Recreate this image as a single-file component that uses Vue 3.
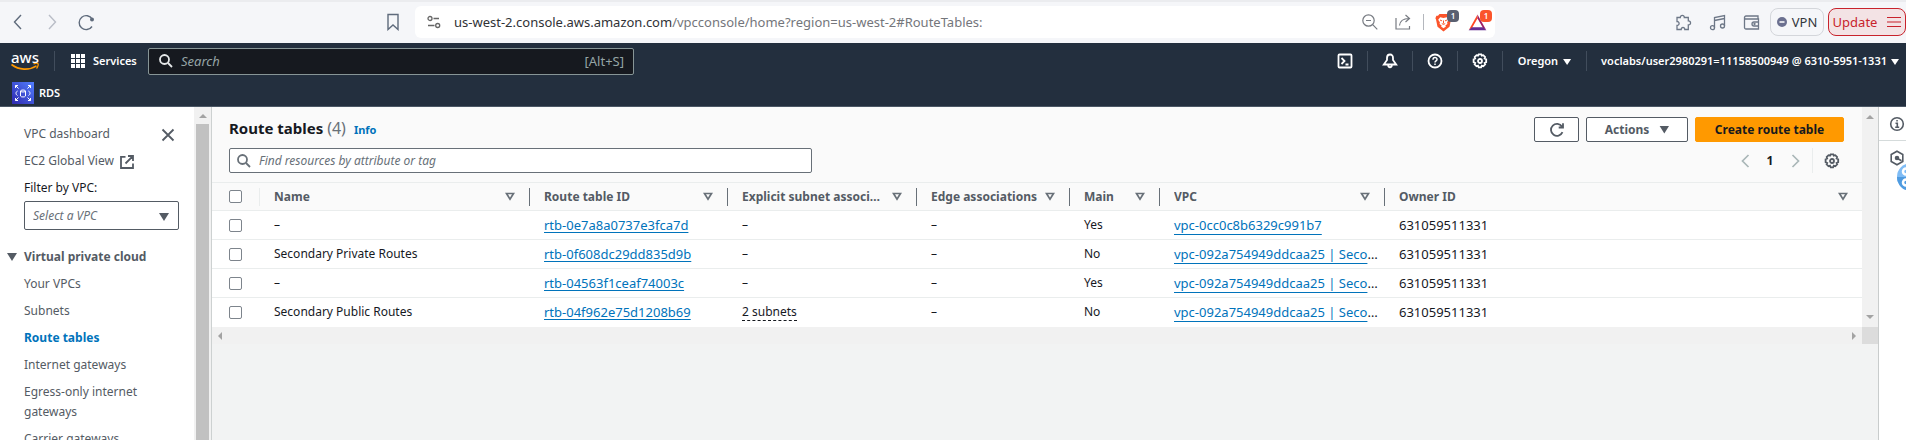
<script setup>
const columns = [
  { key: 'name', label: 'Name' },
  { key: 'id', label: 'Route table ID' },
  { key: 'subnets', label: 'Explicit subnet associations' },
  { key: 'edge', label: 'Edge associations' },
  { key: 'main', label: 'Main' },
  { key: 'vpc', label: 'VPC' },
  { key: 'owner', label: 'Owner ID' },
]

const rows = [
  { name: '–', id: 'rtb-0e7a8a0737e3fca7d', subnets: '', main: 'Yes', vpc: 'vpc-0cc0c8b6329c991b7' },
  { name: 'Secondary Private Routes', id: 'rtb-0f608dc29dd835d9b', subnets: '', main: 'No', vpc: 'vpc-092a754949ddcaa25 | Secondary' },
  { name: '–', id: 'rtb-04563f1ceaf74003c', subnets: '', main: 'Yes', vpc: 'vpc-092a754949ddcaa25 | Secondary' },
  { name: 'Secondary Public Routes', id: 'rtb-04f962e75d1208b69', subnets: '2 subnets', main: 'No', vpc: 'vpc-092a754949ddcaa25 | Secondary' },
]

const links = ['Your VPCs', 'Subnets', 'Route tables', 'Internet gateways', 'Egress-only internet gateways', 'Carrier gateways']
</script>

<template>
  <div class="app">
    <header class="browser">
      <div class="browser-left">
        <button class="nav-btn" aria-label="Back"><svg width="16" height="16" viewBox="0 0 16 16"><path d="M11 1 4.500 8 11 15" /></svg></button>
        <button class="nav-btn faded" aria-label="Forward"><svg width="16" height="16" viewBox="0 0 16 16"><path d="M5 1 11.500 8 5 15" /></svg></button>
        <button class="nav-btn" aria-label="Reload"><svg width="18" height="18" viewBox="0 0 18 18"><path d="M15 13.500A7 7 0 1 1 15.200 6" /><circle cx="15" cy="6.500" r="2" fill="#5f6b7c" stroke="none" /></svg></button>
        <button class="nav-btn bookmark" aria-label="Bookmark"><svg width="14" height="18" viewBox="0 0 14 18"><path d="M2 1.500h10v15l-5-4.500-5 4.500z" /></svg></button>
      </div>
      <div class="address">
        <svg class="tune" width="14" height="14" viewBox="0 0 14 14"><circle cx="3" cy="3.500" r="2" /><path d="M6.500 3.500H12M1 10.500h6.500" /><circle cx="10.700" cy="10.500" r="2" /></svg>
        <div class="url" role="textbox" aria-label="Address">us-west-2.console.aws.amazon.com<span>/vpcconsole/home?region=us-west-2#RouteTables:</span></div>
        <button class="addr-btn" aria-label="Zoom out"><svg width="16" height="16" viewBox="0 0 16 16"><circle cx="6.500" cy="6.500" r="5.700" /><path d="M10.700 10.700 15.300 15.300M4 6.500h5" /></svg></button>
        <button class="addr-btn share" aria-label="Share"><svg width="16" height="16" viewBox="0 0 16 16"><path d="M1 4v11h13.500v-3M4.500 11.500C5 7 8 4.500 14 4.500M10.500 1 14.500 4.500 10.500 8" /></svg></button>
        <i class="addr-rule"></i>
        <button class="badge-btn" aria-label="Brave Shields">
          <svg width="17" height="19" viewBox="0 0 17 19"><path fill="#fb542b" d="M4.500 1h8l1.500 1.800 1.600-.1 1 2.500-.6 1.300-1.500 7.200L8.500 18.500 2.500 13.700 1 6.500.4 5.200l1-2.500 1.600.1z" /><path fill="#fff" d="M5.200 4.300 8.500 4.900l3.300-.6 2 2.500-1.700 2.500.3 1.600-2.100 1.600.6.900-2.400 1.800-2.400-1.800.6-.9L4.600 10.900l.3-1.600L3.200 6.800z" /><path fill="none" stroke="#fb542b" d="m5 7 2 .9M12 7l-2 .9M8.500 7.500v3M6.800 10.600l1.700.8 1.700-.8" /></svg>
          <b class="count dark">1</b>
        </button>
        <button class="badge-btn" aria-label="Brave Rewards">
          <svg width="19" height="17" viewBox="0 0 19 17"><path fill="#ff4724" d="M9.500.5.800 15.900 4 14 9.500 4.500z" /><path fill="#9e1f63" d="M9.500.5 18.200 15.900 15 14 9.500 4.500z" /><path fill="#662d91" d="M.6 16.300h17.800L15 13.200H4z" /><path fill="#fff" d="m9.500 5.400 4.300 7.600H5.200z" /></svg>
          <b class="count red">1</b>
        </button>
      </div>
      <div class="browser-right">
        <button class="ext" aria-label="Extensions"><svg width="17" height="17" viewBox="0 0 17 17"><path d="M2 3.500h3.300C5 .7 9.700.7 9.300 3.500h4v3.400c3-.3 3 4.300 0 4v4.600H9.800c.2-2.700-3.800-2.700-3.600 0H2v-4c2.800.2 2.800-4.200 0-4z" /></svg></button>
        <button class="ext" aria-label="Media"><svg width="17" height="17" viewBox="0 0 17 17"><path d="M5.500 13.700V3.500l10-2v10.400M5.500 6.500l10-2" /><circle cx="3.500" cy="13.700" r="2" /><circle cx="13.500" cy="12" r="2" /></svg></button>
        <button class="ext" aria-label="Wallet"><svg width="17" height="17" viewBox="0 0 17 17"><path d="M15 5V2H3a1.500 1.500 0 0 0 0 3h12.500v10H3a1.500 1.500 0 0 1-1.500-1.500v-10M15.500 8H11a2 2 0 0 0 0 4h4.500" /><circle cx="11.500" cy="10" r=".5" /></svg></button>
        <button class="vpn"><svg width="10" height="10" viewBox="0 0 10 10"><circle cx="5" cy="5" r="5" fill="#6b7090" /><path d="M2.500 5h5" stroke="#fff" stroke-width="1.500" /></svg>VPN</button>
        <button class="update">Update<svg width="14" height="12" viewBox="0 0 14 12"><path d="M0 1.500h14M0 6h14M0 10.500h14" stroke="#c8232c" stroke-width="1.200" /></svg></button>
      </div>
    </header>

    <nav class="aws" aria-label="Console">
      <div class="aws-top">
        <a class="logo" href="#">aws<svg width="28" height="8" viewBox="0 0 28 8"><path d="M.5 1.500C8 7.300 18 7.600 25.500 2.800" fill="none" stroke="#f90" stroke-width="1.600" /><path d="M22.500 1c2-.8 4-.8 4.500-.3s0 3-1.500 4.800" fill="none" stroke="#f90" stroke-width="1.300" /></svg></a>
        <button class="services"><svg width="14" height="14" viewBox="0 0 14 14" fill="#fff"><path d="M0 0h4v4H0zM5 0h4v4H5zM10 0h4v4h-4zM0 5h4v4H0zM5 5h4v4H5zM10 5h4v4h-4zM0 10h4v4H0zM5 10h4v4H5zM10 10h4v4h-4z" /></svg>Services</button>
        <label class="search">
          <svg width="14" height="14" viewBox="0 0 14 14"><circle cx="5.500" cy="5.500" r="4.500" /><path d="m9 9 4 4" /></svg>
          <input type="search" placeholder="Search" aria-label="Search">
          <span>[Alt+S]</span>
        </label>
        <div class="aws-right">
          <button class="tool first" aria-label="CloudShell"><svg width="16" height="16" viewBox="0 0 16 16"><rect x="1.500" y="1.500" width="13" height="13" rx="1" /><path d="m4.500 5 3 3-3 3M8.500 11.500h3" /></svg></button>
          <button class="tool" aria-label="Notifications"><svg width="16" height="16" viewBox="0 0 16 16"><path d="M8 1.500c-2 0-3 1.500-3 3.500v2L1.800 11.500h12.400L11 7V5c0-2-1-3.500-3-3.500zM6.200 12c0 3 3.600 3 3.600 0" /></svg></button>
          <button class="tool" aria-label="Support"><svg width="16" height="16" viewBox="0 0 16 16"><circle cx="8" cy="8" r="6.500" /><path d="M6 6.700c0-2.900 4-2.700 4-.3C10 7.800 8 7.800 8 9.500M8 10.500v1.500" stroke-width="1.500" /></svg></button>
          <button class="tool" aria-label="Settings"><svg width="16" height="16" viewBox="0 0 16 16"><path d="m6.700 1.300h2.600l.5 1.400 1.500-.5 1.800 1.800-.5 1.500 1.600.8v2.900l-1.600.7.600 1.500-1.900 1.900-1.500-.6-.7 1.600H6.700L6 12.700l-1.500.6-1.900-1.900.6-1.500-1.600-.7V6.300l1.600-.8L2.700 4l1.800-1.800 1.500.5z" /><circle cx="8" cy="8" r="2" /></svg></button>
          <button class="menu">Oregon<i class="caret small"></i></button>
          <button class="menu last">voclabs/user2980291=11158500949 @ 6310-5951-1331<i class="caret small"></i></button>
        </div>
      </div>
      <div class="aws-favs">
        <a href="#"><svg width="22" height="22" viewBox="0 0 22 22"><defs><linearGradient id="rds" x1="0" y1="1" x2="1" y2="0"><stop offset="0" stop-color="#2e27ad" /><stop offset="1" stop-color="#527fff" /></linearGradient></defs><path fill="url(#rds)" d="M0 0h22v22H0z" /><path fill="none" stroke="#fff" d="M3.500 6v-2.500h2.500M3.500 3.500l3 3M16 3.500h2.500v2.500M18.500 3.500l-3 3M3.500 16v2.500h2.500M3.500 18.500l3-3M18.500 16v2.500h-2.500M18.500 18.500l-3-3M5.500 9c-2 1-2 3.500 0 4.500M16.500 9c2 1 2 3.500 0 4.500M8.500 9v5c0 1.300 5 1.300 5 0v-5" /><ellipse cx="11" cy="9" rx="2.500" ry="1" fill="none" stroke="#fff" /></svg>RDS</a>
      </div>
    </nav>

    <div class="body">
      <aside class="side">
        <div class="side-content">
          <div class="side-head"><a href="#">VPC dashboard</a><button aria-label="Close"><svg width="14" height="14" viewBox="0 0 14 14"><path d="m1.500 1.500 11 11M12.500 1.500l-11 11" /></svg></button></div>
          <a class="ext-link" href="#">EC2 Global View <svg width="14" height="14" viewBox="0 0 14 14"><path d="M5.500 1.800H1v11.200h12V8.500M8 1h5v5M12.800 1.200 5.500 8.500" /></svg></a>
          <label class="filter-label" for="vpc-filter">Filter by VPC:</label>
          <div class="select">
            <select id="vpc-filter"><option>Select a VPC</option></select>
            <i class="caret"></i>
          </div>
          <button class="group"><i class="caret"></i>Virtual private cloud</button>
          <a v-for="l in links" :key="l" class="side-link" :class="{ current: l === 'Route tables' }" href="#">{{ l }}</a>
        </div>
        <div class="side-scroll"><i class="arrow up"></i><i class="thumb"></i></div>
      </aside>

      <main class="main">
        <div class="panel-row">
          <section class="panel">
            <div class="panel-head">
              <div class="row">
                <div class="title">
                  <h1>Route tables <span>(4)</span></h1>
                  <a class="info" href="#">Info</a>
                </div>
                <div class="actions">
                  <button class="btn refresh" aria-label="Refresh"><svg width="16" height="16" viewBox="0 0 16 16"><path d="M13.500 10.200A6 6 0 1 1 13 4.500M14 1.200v4.300H9.700" /></svg></button>
                  <button class="btn act">Actions<i class="caret"></i></button>
                  <button class="btn primary">Create route table</button>
                </div>
              </div>
              <div class="row">
                <label class="find">
                  <svg width="14" height="14" viewBox="0 0 14 14"><circle cx="5.500" cy="5.500" r="4.500" /><path d="m9 9 4 4" /></svg>
                  <input type="search" placeholder="Find resources by attribute or tag" aria-label="Find resources by attribute or tag">
                </label>
                <div class="pages">
                  <button class="pg" aria-label="Previous page"><svg width="9" height="14" viewBox="0 0 9 14"><path d="M7.500 1 1.500 7l6 6" /></svg></button>
                  <button class="num">1</button>
                  <button class="pg" aria-label="Next page"><svg width="9" height="14" viewBox="0 0 9 14"><path d="m1.500 1 6 6-6 6" /></svg></button>
                  <i class="pg-rule"></i>
                  <button class="gear" aria-label="Preferences"><svg width="16" height="16" viewBox="0 0 16 16"><path d="m6.700 1.300h2.600l.5 1.400 1.500-.5 1.800 1.800-.5 1.500 1.600.8v2.900l-1.600.7.600 1.500-1.900 1.900-1.500-.6-.7 1.600H6.700L6 12.700l-1.500.6-1.900-1.900.6-1.500-1.600-.7V6.300l1.600-.8L2.700 4l1.800-1.800 1.500.5z" /><circle cx="8" cy="8" r="2" /></svg></button>
                </div>
              </div>
            </div>
            <table>
              <colgroup>
                <col class="c-check"><col class="c-name"><col class="c-id"><col class="c-subnets"><col class="c-edge"><col class="c-main"><col class="c-vpc"><col>
              </colgroup>
              <thead>
                <tr>
                  <th class="check"><input type="checkbox" aria-label="Select all"></th>
                  <th v-for="(c, i) in columns" :key="c.key" scope="col">
                    <div class="th" :class="{ light: i === 0 }">
                      <span>{{ c.label }}</span>
                      <button :aria-label="'Sort by ' + c.label"><svg width="10" height="9" viewBox="0 0 10 9"><path d="M1.500 1.500h7L5 7.200z" /></svg></button>
                    </div>
                  </th>
                </tr>
              </thead>
              <tbody>
                <tr v-for="r in rows" :key="r.id">
                  <td class="check"><input type="checkbox" :aria-label="'Select ' + r.id"></td>
                  <td>{{ r.name }}</td>
                  <td class="ident"><a href="#">{{ r.id }}</a></td>
                  <td><button v-if="r.subnets" class="pop">{{ r.subnets }}</button><template v-else>–</template></td>
                  <td>–</td>
                  <td>{{ r.main }}</td>
                  <td class="ident vpc"><a class="low" href="#">{{ r.vpc }}</a></td>
                  <td class="ident">631059511331</td>
                </tr>
              </tbody>
            </table>
          </section>
          <div class="v-scroll"><i class="arrow up"></i><i class="arrow down"></i></div>
        </div>
        <div class="h-scroll"><div><i class="arrow left"></i><i class="arrow right"></i></div><i class="corner"></i></div>
      </main>

      <aside class="tools">
        <button aria-label="Info panel"><svg width="16" height="16" viewBox="0 0 16 16"><circle cx="8" cy="8" r="6.300" /><path d="M6.500 7.200H8.300v4M6.200 11.300h4M7.300 4.700h1.500" /></svg></button>
        <button aria-label="Diagnostics"><svg width="16" height="16" viewBox="0 0 16 16"><path d="m8 1.200 5.800 3.300v7L8 14.800l-5.800-3.300v-7z" /><circle cx="8" cy="8" r="1.500" fill="#545b64" /><path d="m8.500 8.500 4 2.200" /></svg></button>
        <svg class="bubble" width="28" height="28" viewBox="0 0 28 28"><circle cx="14" cy="14" r="14" fill="#7fbcf5" /><path d="M0 14a14 14 0 0 0 28 0z" fill="#4f9be0" /><g fill="none" stroke="#fff" stroke-width="2.500"><circle cx="9" cy="8.500" r="3" /><circle cx="9" cy="19.500" r="3" /></g></svg>
      </aside>
    </div>
  </div>
</template>

<style>
body { overflow: hidden; }
</style>

<style scoped>
.app { height: 100vh; display: flex; flex-direction: column; overflow: hidden; font: 12px/20px "Noto Sans", "Open Sans", sans-serif; color: #16191f; background: #f2f3f3; }
.app *, .app *::before { box-sizing: border-box; }
button, input, select { font: inherit; color: inherit; }
button { background: none; border: 0; padding: 0; margin: 0; display: flex; align-items: center; justify-content: center; }
a { color: inherit; text-decoration: none; }
svg { flex: none; display: block; }
input[type="search"] { appearance: none; border: 0; outline: 0; background: none; padding: 0; min-width: 0; flex: 1; font-style: italic; }

.browser { flex: none; height: 43px; border-top: 2px solid #ebecef; background: #f5f6f9; display: grid; grid-template-columns: 1fr minmax(0, 1080px) 1fr; padding: 0 0 1px 4px; align-items: center; }
.browser-left { display: flex; padding-right: 13px; margin-left: -3px; }
.nav-btn { width: 34px; height: 32px; }
.nav-btn svg { fill: none; stroke: #5f6b7c; stroke-width: 1.4; }
.faded svg { stroke: #b9bdc7; }
.bookmark { margin-left: auto; width: 18px; }
.address { height: 32px; background: #fff; border-radius: 6px; display: flex; align-items: center; padding: 0 8px 0 12px; }
.tune { fill: none; stroke: #666; stroke-width: 1.3; }
.url { flex: 1; margin-left: 13px; font-size: 13px; color: #303236; white-space: nowrap; overflow: hidden; }
.url span { color: #74767b; }
.addr-btn svg { fill: none; stroke: #777b82; stroke-width: 1.2; }
.share { margin-left: 17px; }
.addr-rule { width: 1px; height: 16px; background: #b4b7bd; margin: 0 11px 0 12px; }
.badge-btn { position: relative; width: 17px; height: 20px; }
.badge-btn + .badge-btn { margin-left: 16px; width: 19px; }
.count { position: absolute; right: -7px; top: -2px; width: 12px; height: 12px; border-radius: 4px; font-size: 8px; line-height: 12px; font-weight: 600; color: #fff; text-align: center; }
.badge-btn + .badge-btn .count { right: -5px; }
.dark { background: #5a5f70; }
.red { background: #fb542b; }
.browser-right { display: flex; justify-content: flex-end; align-items: center; }
.ext { margin-right: 17px; }
.ext svg { fill: none; stroke: #6d7787; stroke-width: 1.3; }
.vpn, .update { height: 28px; border-radius: 8px; font-size: 13px; }
.vpn { width: 54px; gap: 5px; border: 1px solid #d4d6db; color: #33363d; margin-left: -7px; }
.update { width: 78px; gap: 10px; margin-left: 4px; border: 1px solid #c8232c; background: #f3e3e5; color: #c8232c; }

.aws { flex: none; background: #232f3e; border-bottom: 1px solid #4b5765; color: #fff; }
.aws-top { height: 36px; display: flex; align-items: center; font-size: 11px; font-weight: 600; }
.logo { width: 55px; height: 20px; padding-left: 11px; border-right: 1px solid #414d5c; font-size: 15px; line-height: 12px; font-weight: 500; display: flex; flex-direction: column; }
.services { margin-left: 16px; gap: 8px; width: 77px; justify-content: flex-start; font-weight: 600; font-size: 11px; }
.search { width: 486px; height: 27px; background: #16191f; border: 1px solid #879596; border-radius: 2px; display: flex; align-items: center; padding: 0 9px 0 10px; gap: 8px; font-size: 13px; font-weight: 400; color: #95a5a6; }
.search svg, .find svg { fill: none; stroke: #e6e9ea; stroke-width: 1.8; }
.search input::placeholder { color: #95a5a6; opacity: 1; }
.aws-right { margin-left: auto; display: flex; align-items: center; }
.tool, .menu { height: 20px; border-left: 1px solid #414d5c; }
.tool { width: 45px; }
.first { border-left-color: transparent; }
.tool svg { fill: none; stroke: #fff; stroke-width: 1.8; }
.menu { padding: 0 15px; gap: 5px; }
.last { padding: 0 7px 0 14px; gap: 4px; }
.aws-favs { height: 27px; padding-left: 12px; display: flex; align-items: center; font-size: 11px; font-weight: 600; }
.aws-favs a { display: flex; align-items: center; gap: 5px; }

.caret { flex: none; width: 10px; height: 8px; background: #545b64; clip-path: polygon(0 0, 100% 0, 50% 100%); }
.caret.small { width: 8px; height: 6px; background: #fff; margin-top: 2px; }

.body { flex: 1; min-height: 0; display: flex; }
.side { flex: none; width: 212px; background: #fff; border-right: 1px solid #cdd1d1; display: flex; overflow: hidden; color: #545b64; }
.side-content { flex: 1; padding: 17px 15px 0 24px; display: flex; flex-direction: column; align-items: stretch; gap: 7px; }
.side-head { display: flex; justify-content: space-between; align-items: center; padding-right: 4px; height: 20px; flex: none; }
.side-head svg { fill: none; stroke: #545b64; stroke-width: 1.8; margin-top: 2px; }
.ext-link { display: flex; align-items: center; gap: 6px; }
.ext-link svg { fill: none; stroke: #545b64; stroke-width: 1.8; margin-top: 2px; }
.filter-label { color: #16191f; }
.select { position: relative; height: 29px; margin-top: -4px; flex: none; display: flex; }
.select select { width: 100%; appearance: none; border: 1px solid #545b64; border-radius: 2px; background: #fff; padding: 0 8px; font-style: italic; color: #687078; }
.select .caret { position: absolute; right: 10px; top: 12px; }
.group { justify-content: flex-start; gap: 7px; margin: 10px 0 0 -17px; font-weight: 700; }
.current { color: #0073bb; font-weight: 700; }
.side-scroll { flex: none; width: 17px; background: #f1f1f1; display: flex; flex-direction: column; align-items: center; padding-top: 7px; }
.thumb { flex: 1; width: 13px; margin-top: 6px; background: #c1c1c1; }

.arrow { flex: none; border: 4px solid transparent; }
.arrow.up { border-top: 0; border-bottom-color: #a3a3a3; }
.arrow.down { border-bottom: 0; border-top-color: #a3a3a3; }
.arrow.left { border-left: 0; border-right-color: #a3a3a3; }
.arrow.right { border-right: 0; border-left-color: #a3a3a3; }

.main { flex: 1; min-width: 0; }
.panel-row { display: flex; }
.panel { flex: 1; min-width: 0; background: #fafafa; }
.panel-head { padding: 10px 18px 9px 17px; display: flex; flex-direction: column; gap: 6px; }
.row { display: flex; align-items: center; height: 25px; }
.title { display: flex; align-items: baseline; gap: 8px; padding-bottom: 3px; }
h1 { margin: 0; font-size: 15px; line-height: 20px; font-weight: 700; }
h1 span { font-size: 16px; font-weight: 400; color: #687078; }
.info { font-size: 11px; line-height: 16px; font-weight: 700; color: #0073bb; }
.actions { margin-left: auto; display: flex; gap: 7px; }
.btn { height: 25px; border: 1px solid #545b64; border-radius: 2px; background: #fff; color: #545b64; font-weight: 700; }
.refresh { width: 45px; }
.refresh svg { fill: none; stroke: #545b64; stroke-width: 1.8; }
.act { width: 102px; gap: 10px; }
.primary { width: 149px; background: #f90; border-color: #f90; color: #16191f; }
.find { flex: 0 1 583px; height: 25px; background: #fff; border: 1px solid #687078; border-radius: 2px; display: flex; align-items: center; gap: 8px; padding: 0 7px; color: #687078; }
.find svg { stroke: #687078; }
.find input::placeholder { color: #687078; opacity: 1; }
.pages { margin-left: auto; display: flex; align-items: center; }
.pg { width: 20px; height: 20px; }
.pg svg { fill: none; stroke: #aab7b8; stroke-width: 1.7; }
.num { width: 30px; font-weight: 700; }
.pg-rule { width: 1px; height: 25px; margin: 0 7px; background: #eaeded; }
.gear { width: 24px; height: 24px; }
.gear svg { fill: none; stroke: #545b64; stroke-width: 1.8; }

table { width: 100%; table-layout: fixed; border-collapse: separate; border-spacing: 0; border-top: 1px solid #eaeded; }
.c-check { width: 47px; }
.c-name { width: 270px; }
.c-id { width: 198px; }
.c-subnets { width: 189px; }
.c-edge { width: 153px; }
.c-main { width: 90px; }
.c-vpc { width: 225px; }
th { height: 28px; padding: 0 14px 0 0; border-bottom: 1px solid #eaeded; text-align: left; color: #545b64; font-weight: 700; }
.th { height: 18px; border-left: 1px solid #687078; padding-left: 14px; display: flex; align-items: center; justify-content: space-between; gap: 8px; }
.th.light { border-left-color: #eaeded; }
.th span { overflow: hidden; text-overflow: ellipsis; white-space: nowrap; }
.th svg { fill: none; stroke: #687078; stroke-width: 1.7; }
td { height: 29px; padding: 0 13px 0 15px; border-bottom: 1px solid #eaeded; background: #fff; white-space: nowrap; overflow: hidden; text-overflow: ellipsis; }
tbody tr:last-child td { border-bottom-color: #fff; }
.ident { font-size: 13px; }
td.vpc { padding-right: 6px; }
td a { color: #0073bb; text-decoration: underline; text-underline-offset: 2px; }
td a.low { text-underline-offset: 4px; }
td.ident a { text-decoration-skip-ink: none; }
.pop { display: inline-block; line-height: 16px; border-bottom: 1px dashed #16191f; }
td.check, th.check { padding: 0 0 0 17px; text-overflow: clip; }
input[type="checkbox"] { appearance: none; display: block; width: 13px; height: 13px; margin: 0; border: 1px solid #7d848c; border-radius: 2px; background: #fff; }

.v-scroll { flex: none; width: 16px; background: #f1f1f1; display: flex; flex-direction: column; align-items: center; justify-content: space-between; padding: 8px 0; }
.h-scroll { display: flex; height: 17px; }
.h-scroll div { flex: 1; display: flex; align-items: center; justify-content: space-between; background: #f1f1f1; padding: 0 6px; }
.corner { width: 16px; background: #dcdcdc; }

.tools { position: relative; flex: none; width: 28px; background: #fff; border-left: 1px solid #c9cccc; overflow: hidden; }
.tools button { width: 36px; height: 34px; }
.tools button:first-child { border-bottom: 1px solid #d5dbdb; }
.tools button svg { fill: none; stroke: #545b64; stroke-width: 1.6; }
.bubble { position: absolute; left: 18px; top: 56px; }
</style>
